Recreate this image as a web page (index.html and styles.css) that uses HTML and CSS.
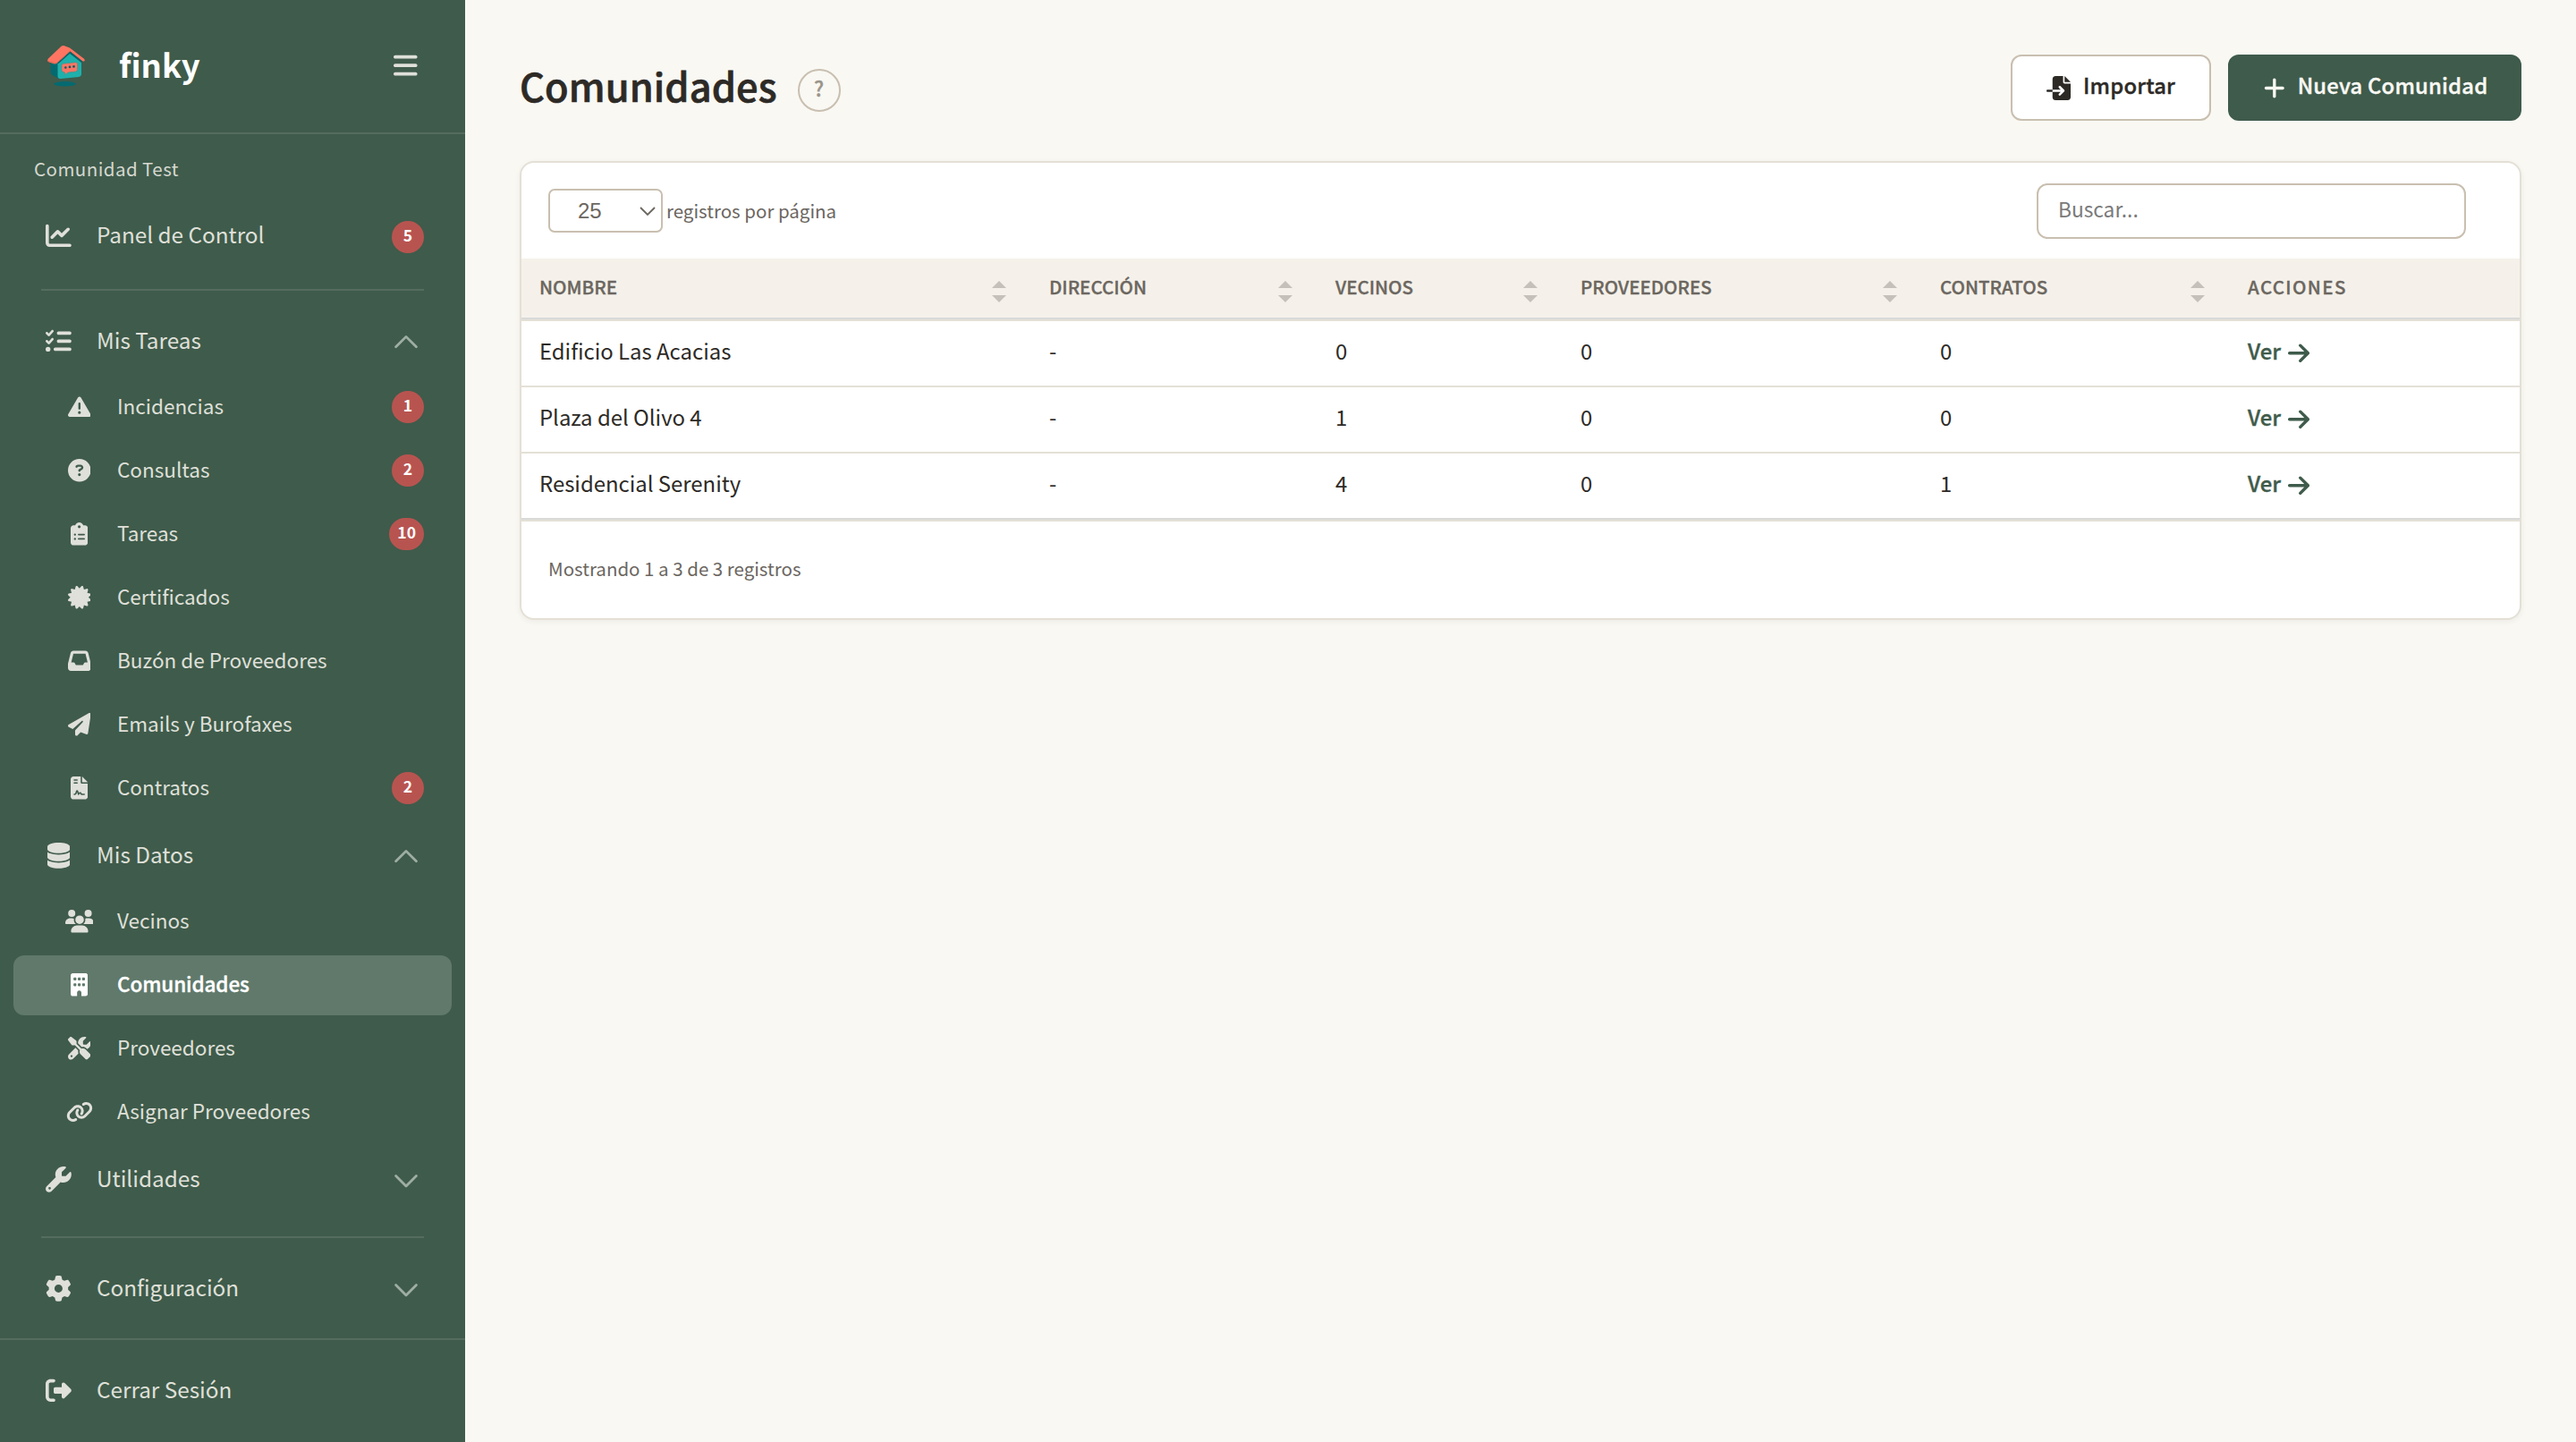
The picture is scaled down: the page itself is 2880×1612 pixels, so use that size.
FILE: index.html
```
<!DOCTYPE html>
<html lang="es">

<head>
  <meta charset="UTF-8" />
  <title>Finky - Comunidades</title>
  <meta name="viewport" content="width=device-width, initial-scale=1.0" />
  <link rel="stylesheet" href="styles.css">
</head>

<body>
  <aside class="sidebar">
    <div class="sidebar-header">
      <svg class="logo" viewBox="0 0 60 60">
        <ellipse cx="27.5" cy="49.8" rx="12.3" ry="2.7" fill="#046a70" />
        <path d="M11.5 27l9-3 1 20-7-3.6q-3-1.4-3-4z" fill="#046a70" />
        <path d="M19.5 27L33 15.500 46 26v12.500q0 3-3 3.400l-20 2q-3.500.3-3.500-3z" fill="#1fb0ac" />
        <path d="M20 26.500L33 14.800 46.500 25" fill="none" stroke="#07676c" stroke-width="1.600" />
        <path d="M8.200 24.200q-.5-1.600 1-2.900L23.500 7.700q1.300-1.200 3-.6L33 9.500l16 12.300q1.400 1.300.4 2.400-1 .8-2.500-.2L33.500 13.300 18.500 26.700q-1.600 1.200-3.500.5l-5-1.600q-1.400-.4-1.800-1.400z" fill="#ff7562" />
        <path d="M8.300 24q2.500.9 8 2.600 1 .2 2.200-.3l14.800-13.200" fill="none" stroke="#d9604f" stroke-width=".7" />
        <path d="M25.500 27.200l14-1.500q2.200-.1 2.300 2l-.2 6q-.1 2-2 2.300l-8.600 1-3 2.500-.6-2.500-1.600-.5q-1.800-.3-1.900-2v-5q0-2 1.600-2.300z" fill="#fb7564" stroke="#4a8f86" stroke-width=".7" />
        <g fill="#0a5a60">
          <circle cx="28.300" cy="31.500" r="1.300" />
          <circle cx="33" cy="30.900" r="1.300" />
          <circle cx="37.500" cy="30.400" r="1.300" />
        </g>
      </svg>
      <span class="brand">finky</span>
      <svg class="burger" viewBox="0 0 448 512"><path d="M0 96C0 78.3 14.3 64 32 64H416c17.700 0 32 14.300 32 32s-14.300 32-32 32H32C14.300 128 0 113.700 0 96zM0 256c0-17.700 14.300-32 32-32H416c17.700 0 32 14.300 32 32s-14.300 32-32 32H32c-17.700 0-32-14.300-32-32zM448 416c0 17.700-14.300 32-32 32H32c-17.700 0-32-14.300-32-32s14.300-32 32-32H416c17.700 0 32 14.300 32 32z" /></svg>
    </div>

    <div class="account">Comunidad Test</div>

    <nav class="nav">
      <a class="nav-item">
        <span class="nav-icon"><svg viewBox="0 0 512 512"><path d="M64 64c0-17.700-14.300-32-32-32S0 46.300 0 64V400c0 44.200 35.800 80 80 80H480c17.700 0 32-14.300 32-32s-14.300-32-32-32H80c-8.800 0-16-7.200-16-16V64zm406.600 86.600c12.500-12.500 12.500-32.800 0-45.300s-32.800-12.500-45.300 0L320 210.700l-57.400-57.400c-12.500-12.500-32.800-12.500-45.300 0l-112 112c-12.500 12.500-12.500 32.800 0 45.300s32.800 12.500 45.300 0L240 221.300l57.400 57.400c12.500 12.500 32.800 12.500 45.300 0l128-128z" /></svg></span>
        <span class="nav-label">Panel de Control</span>
        <span class="badge">5</span>
      </a>
      <div class="divider"></div>

      <a class="nav-item">
        <span class="nav-icon"><svg viewBox="0 0 512 512"><path d="M152.1 38.2c9.9 8.9 10.7 24 1.8 33.9l-72 80c-4.4 4.9-10.6 7.8-17.2 7.9s-12.9-2.4-17.6-7L7 113C-2.3 103.6-2.3 88.4 7 79s24.6-9.4 33.900 0l22.100 22.100 55.100-61.200c8.900-9.900 24-10.700 33.900-1.800zm0 160c9.900 8.900 10.700 24 1.800 33.900l-72 80c-4.400 4.900-10.600 7.800-17.200 7.900s-12.900-2.400-17.600-7L7 273c-9.400-9.400-9.400-24.600 0-33.900s24.600-9.400 33.900 0l22.100 22.100 55.100-61.200c8.900-9.900 24-10.700 33.900-1.800zM224 96c0-17.700 14.300-32 32-32H480c17.700 0 32 14.300 32 32s-14.300 32-32 32H256c-17.700 0-32-14.300-32-32zm0 160c0-17.700 14.300-32 32-32H480c17.700 0 32 14.300 32 32s-14.300 32-32 32H256c-17.700 0-32-14.300-32-32zM160 416c0-17.700 14.300-32 32-32H480c17.700 0 32 14.300 32 32s-14.300 32-32 32H192c-17.700 0-32-14.300-32-32zM48 368a48 48 0 1 1 0 96 48 48 0 1 1 0-96z" /></svg></span>
        <span class="nav-label">Mis Tareas</span>
        <svg class="chevron" viewBox="0 0 16 16"><path d="M1.900 11.100L8 5l6.100 6.100" /></svg>
      </a>
      <div class="subnav">
        <a class="sub-item">
          <span class="nav-icon"><svg viewBox="0 0 512 512"><path d="M256 32c14.200 0 27.300 7.500 34.500 19.800l216 368c7.300 12.400 7.300 27.700 .2 40.100S486.300 480 472 480H40c-14.300 0-27.600-7.700-34.700-20.100s-7-27.800 .2-40.100l216-368C228.700 39.500 241.800 32 256 32zm0 128c-13.300 0-24 10.700-24 24V296c0 13.300 10.700 24 24 24s24-10.700 24-24V184c0-13.300-10.700-24-24-24zm32 224a32 32 0 1 0 -64 0 32 32 0 1 0 64 0z" /></svg></span>
          <span class="nav-label">Incidencias</span>
          <span class="badge">1</span>
        </a>
        <a class="sub-item">
          <span class="nav-icon"><svg viewBox="0 0 512 512"><path d="M256 512A256 256 0 1 0 256 0a256 256 0 1 0 0 512zM169.800 165.300c7.900-22.300 29.100-37.300 52.800-37.300h58.300c34.900 0 63.100 28.300 63.100 63.100c0 22.600-12.100 43.500-31.700 54.800L280 264.400c-.2 13-10.900 23.600-24 23.600c-13.300 0-24-10.700-24-24V250.500c0-8.600 4.600-16.500 12.100-20.800l44.300-25.400c4.700-2.700 7.600-7.700 7.600-13.100c0-8.400-6.800-15.100-15.100-15.100H222.600c-3.400 0-6.400 2.100-7.500 5.300l-.4 1.200c-4.400 12.500-18.200 19-30.600 14.600s-19-18.200-14.600-30.600l.4-1.200zM224 352a32 32 0 1 1 64 0 32 32 0 1 1 -64 0z" /></svg></span>
          <span class="nav-label">Consultas</span>
          <span class="badge">2</span>
        </a>
        <a class="sub-item">
          <span class="nav-icon"><svg viewBox="0 0 384 512"><path d="M192 0c-41.800 0-77.400 26.700-90.500 64H64C28.700 64 0 92.700 0 128V448c0 35.300 28.700 64 64 64H320c35.300 0 64-28.700 64-64V128c0-35.300-28.700-64-64-64H282.500C269.400 26.700 233.800 0 192 0zm0 64a32 32 0 1 1 0 64 32 32 0 1 1 0-64zM72 272a24 24 0 1 1 48 0 24 24 0 1 1 -48 0zm104-16H304c8.800 0 16 7.200 16 16s-7.200 16-16 16H176c-8.800 0-16-7.200-16-16s7.200-16 16-16zM72 368a24 24 0 1 1 48 0 24 24 0 1 1 -48 0zm88 0c0-8.800 7.200-16 16-16H304c8.800 0 16 7.200 16 16s-7.200 16-16 16H176c-8.800 0-16-7.200-16-16z" /></svg></span>
          <span class="nav-label">Tareas</span>
          <span class="badge">10</span>
        </a>
        <a class="sub-item">
          <span class="nav-icon"><svg viewBox="0 0 512 512"><path d="M211 7.300C205 1 196-1.400 187.600 .8s-14.900 8.900-17.100 17.300L154.700 80.600l-62-17.500c-8.400-2.400-17.400 0-23.500 6.100s-8.500 15.100-6.100 23.500l17.500 62L18.100 170.600c-8.400 2.100-15 8.700-17.300 17.100S1 205 7.300 211l46.200 45L7.300 301C1 307-1.400 316 .8 324.400s8.900 14.900 17.300 17.100l62.500 15.800-17.500 62c-2.400 8.400 0 17.400 6.100 23.500s15.100 8.500 23.500 6.100l62-17.500 15.800 62.500c2.100 8.400 8.700 15 17.100 17.300s17.300-.2 23.400-6.400l45-46.200 45 46.200c6.100 6.200 15 8.700 23.400 6.400s14.900-8.900 17.100-17.300l15.800-62.500 62 17.500c8.400 2.400 17.400 0 23.500-6.100s8.500-15.100 6.100-23.500l-17.500-62 62.500-15.800c8.400-2.100 15-8.700 17.300-17.100s-.2-17.400-6.400-23.400l-46.200-45 46.200-45c6.200-6.100 8.700-15 6.400-23.400s-8.900-14.900-17.300-17.100l-62.500-15.800 17.500-62c2.400-8.400 0-17.400-6.100-23.500s-15.100-8.500-23.500-6.100l-62 17.500L341.400 18.100c-2.100-8.400-8.700-15-17.100-17.300S307 1 301 7.300L256 53.500 211 7.300z" /></svg></span>
          <span class="nav-label">Certificados</span>
        </a>
        <a class="sub-item">
          <span class="nav-icon"><svg viewBox="0 0 512 512"><path d="M121 32C91.600 32 66 52 58.900 80.500L1.900 308.400C.6 313.500 0 318.700 0 323.900V416c0 35.300 28.700 64 64 64H448c35.300 0 64-28.700 64-64V323.900c0-5.200-.6-10.400-1.900-15.500l-57-227.900C446 52 420.400 32 391 32H121zm0 64H391l48 192H387.800c-12.100 0-23.200 6.800-28.600 17.700l-14.300 28.600c-5.400 10.800-16.500 17.700-28.600 17.700H195.800c-12.100 0-23.200-6.800-28.600-17.700l-14.300-28.600c-5.400-10.800-16.500-17.700-28.600-17.700H73L121 96z" /></svg></span>
          <span class="nav-label">Buzón de Proveedores</span>
        </a>
        <a class="sub-item">
          <span class="nav-icon"><svg viewBox="0 0 512 512"><path d="M498.100 5.600c10.100 7 15.400 19.100 13.500 31.200l-64 416c-1.500 9.700-7.400 18.200-16 23s-18.900 5.400-28 1.600L284 427.700l-68.500 74.100c-8.900 9.700-22.900 12.900-35.200 8.100S160 493.200 160 480V396.400c0-4 1.500-7.800 4.200-10.700L331.800 202.800c5.800-6.300 5.600-16-.4-22s-15.700-6.400-22-.7L106 360.800 17.700 316.600C7.100 311.300 .3 300.700 0 288.900s5.900-22.800 16.100-28.700l448-256c10.700-6.100 23.900-5.500 34 1.400z" /></svg></span>
          <span class="nav-label">Emails y Burofaxes</span>
        </a>
        <a class="sub-item">
          <span class="nav-icon"><svg viewBox="0 0 384 512"><path d="M64 0C28.700 0 0 28.700 0 64V448c0 35.300 28.700 64 64 64H320c35.300 0 64-28.700 64-64V160H256c-17.700 0-32-14.300-32-32V0H64zM256 0V128H384L256 0zM80 64h64c8.800 0 16 7.200 16 16s-7.200 16-16 16H80c-8.800 0-16-7.200-16-16s7.200-16 16-16zm0 64h64c8.800 0 16 7.200 16 16s-7.200 16-16 16H80c-8.800 0-16-7.200-16-16s7.200-16 16-16zm54.200 253.800c-6.100 20.300-24.800 34.200-46 34.200H80c-8.800 0-16-7.200-16-16s7.200-16 16-16h8.200c7.100 0 13.300-4.600 15.300-11.400l14.900-49.500c3.400-11.300 13.800-19.100 25.600-19.100s22.200 7.700 25.600 19.100l11.600 38.600c7.400-6.200 16.800-9.700 26.800-9.700c15.900 0 30.400 9 37.500 23.200l4.400 8.800H304c8.800 0 16 7.200 16 16s-7.200 16-16 16H240c-6.100 0-11.600-3.400-14.300-8.800l-8.800-17.700c-1.700-3.400-5.100-5.500-8.800-5.500s-7.200 2.100-8.800 5.500l-8.800 17.700c-2.900 5.900-9.200 9.400-15.700 8.800s-12.100-5.100-13.900-11.300L144 349l-9.800 32.800z" /></svg></span>
          <span class="nav-label">Contratos</span>
          <span class="badge">2</span>
        </a>
      </div>

      <a class="nav-item">
        <span class="nav-icon"><svg viewBox="0 0 448 512"><path d="M448 80v48c0 44.200-100.300 80-224 80S0 172.200 0 128V80C0 35.800 100.300 0 224 0S448 35.800 448 80zM393.200 214.700c20.800-7.400 39.900-16.900 54.800-28.600V288c0 44.200-100.300 80-224 80S0 332.200 0 288V186.100c14.900 11.800 34 21.200 54.800 28.600C99.700 230.700 159.500 240 224 240s124.300-9.300 169.200-25.300zM0 346.100c14.900 11.800 34 21.200 54.800 28.600C99.700 390.700 159.500 400 224 400s124.300-9.300 169.200-25.300c20.800-7.400 39.900-16.900 54.800-28.600V432c0 44.200-100.300 80-224 80S0 476.200 0 432V346.100z" /></svg></span>
        <span class="nav-label">Mis Datos</span>
        <svg class="chevron" viewBox="0 0 16 16"><path d="M1.900 11.100L8 5l6.100 6.100" /></svg>
      </a>
      <div class="subnav">
        <a class="sub-item">
          <span class="nav-icon"><svg viewBox="0 0 640 512"><path d="M144 0a80 80 0 1 1 0 160A80 80 0 1 1 144 0zM512 0a80 80 0 1 1 0 160A80 80 0 1 1 512 0zM0 298.700C0 239.800 47.800 192 106.700 192h42.700c15.900 0 31 3.500 44.600 9.700c-1.300 7.200-1.900 14.700-1.900 22.300c0 38.200 16.800 72.500 43.300 96c-.2 0-.4 0-.7 0H21.300C9.600 320 0 310.400 0 298.700zM405.300 320c-.2 0-.4 0-.7 0c26.600-23.500 43.300-57.800 43.300-96c0-7.600-.7-15-1.900-22.300c13.600-6.300 28.700-9.700 44.600-9.700h42.700C592.200 192 640 239.800 640 298.700c0 11.800-9.600 21.300-21.300 21.300H405.300zM224 224a96 96 0 1 1 192 0 96 96 0 1 1 -192 0zM128 485.300C128 411.700 187.700 352 261.300 352H378.700C452.300 352 512 411.700 512 485.300c0 14.700-11.900 26.700-26.700 26.700H154.700c-14.700 0-26.700-11.900-26.700-26.700z" /></svg></span>
          <span class="nav-label">Vecinos</span>
        </a>
        <a class="sub-item active">
          <span class="nav-icon"><svg viewBox="0 0 384 512"><path d="M48 0C21.500 0 0 21.500 0 48V464c0 26.500 21.500 48 48 48h96V432c0-26.500 21.500-48 48-48s48 21.500 48 48v80h96c26.500 0 48-21.500 48-48V48c0-26.500-21.500-48-48-48H48zM64 240c0-8.800 7.200-16 16-16h32c8.800 0 16 7.200 16 16v32c0 8.800-7.200 16-16 16H80c-8.800 0-16-7.200-16-16V240zm112-16h32c8.800 0 16 7.200 16 16v32c0 8.800-7.200 16-16 16H176c-8.800 0-16-7.200-16-16V240c0-8.800 7.200-16 16-16zm80 16c0-8.800 7.200-16 16-16h32c8.800 0 16 7.200 16 16v32c0 8.800-7.200 16-16 16H272c-8.800 0-16-7.200-16-16V240zM80 96h32c8.800 0 16 7.200 16 16v32c0 8.800-7.200 16-16 16H80c-8.800 0-16-7.200-16-16V112c0-8.800 7.200-16 16-16zm80 16c0-8.800 7.200-16 16-16h32c8.800 0 16 7.200 16 16v32c0 8.800-7.200 16-16 16H176c-8.800 0-16-7.200-16-16V112zM272 96h32c8.800 0 16 7.200 16 16v32c0 8.800-7.200 16-16 16H272c-8.800 0-16-7.200-16-16V112c0-8.800 7.200-16 16-16z" /></svg></span>
          <span class="nav-label">Comunidades</span>
        </a>
        <a class="sub-item">
          <span class="nav-icon"><svg viewBox="0 0 512 512"><path d="M78.600 5C69.100-2.400 55.600-1.500 47 7L7 47c-8.500 8.500-9.400 22-2.100 31.600l80 104c4.500 5.900 11.600 9.400 19 9.400h54.100l109 109c-14.700 29-10 65.400 14.300 89.600l112 112c12.500 12.500 32.800 12.500 45.300 0l64-64c12.500-12.500 12.500-32.800 0-45.300l-112-112c-24.200-24.200-60.600-29-89.600-14.300l-109-109V104c0-7.500-3.500-14.500-9.400-19L78.600 5zM19.900 396.100C7.200 408.800 0 426.100 0 444.100C0 481.600 30.400 512 67.900 512c18 0 35.300-7.200 48-19.900L233.700 374.300c-7.800-20.900-9-43.600-3.600-65.100l-61.700-61.700L19.900 396.100zM512 144c0-10.500-1.100-20.700-3.200-30.500c-2.400-11.200-16.100-14.100-24.200-6l-63.900 63.900c-3 3-7.100 4.700-11.300 4.700H352c-8.800 0-16-7.200-16-16V102.600c0-4.200 1.700-8.300 4.700-11.300l63.900-63.900c8.100-8.100 5.200-21.800-6-24.200C388.700 1.100 378.500 0 368 0C288.500 0 224 64.500 224 144l0 .8 85.300 85.300c36-9.100 75.800 .5 104 28.700L429 274.500c49-23 83-72.800 83-130.500zM56 432a24 24 0 1 1 48 0 24 24 0 1 1 -48 0z" /></svg></span>
          <span class="nav-label">Proveedores</span>
        </a>
        <a class="sub-item">
          <span class="nav-icon"><svg viewBox="0 0 640 512" class="icon-link"><path d="M579.800 267.700c56.500-56.500 56.500-148 0-204.500c-50-50-128.800-56.500-186.300-15.400l-1.600 1.100c-14.400 10.300-17.700 30.300-7.400 44.600s30.300 17.700 44.600 7.400l1.600-1.100c32.100-22.900 76-19.300 103.800 8.600c31.500 31.500 31.500 82.500 0 114L422.300 334.800c-31.500 31.500-82.500 31.500-114 0c-27.900-27.900-31.500-71.800-8.600-103.800l1.100-1.600c10.300-14.400 6.900-34.400-7.400-44.600s-34.400-6.900-44.600 7.400l-1.100 1.600C206.500 251.200 213 330 263 380c56.500 56.500 148 56.500 204.500 0L579.800 267.700zM60.200 244.300c-56.500 56.500-56.500 148 0 204.500c50 50 128.800 56.500 186.300 15.400l1.600-1.100c14.400-10.300 17.700-30.300 7.400-44.600s-30.300-17.700-44.600-7.400l-1.600 1.100c-32.100 22.900-76 19.300-103.800-8.600C74 372 74 321 105.500 289.500L217.700 177.200c31.500-31.500 82.500-31.500 114 0c27.900 27.900 31.500 71.800 8.600 103.900l-1.100 1.600c-10.300 14.400-6.900 34.400 7.400 44.600s34.400 6.900 44.600-7.400l1.100-1.600C433.500 260.800 427 182 377 132c-56.500-56.500-148-56.500-204.500 0L60.200 244.300z" /></svg></span>
          <span class="nav-label">Asignar Proveedores</span>
        </a>
      </div>

      <a class="nav-item">
        <span class="nav-icon"><svg viewBox="0 0 512 512"><path d="M352 320c88.400 0 160-71.600 160-160c0-15.300-2.200-30.100-6.200-44.200c-3.100-10.800-16.400-13.200-24.300-5.300l-76.800 76.800c-3 3-7.100 4.700-11.300 4.700H336c-8.800 0-16-7.200-16-16V118.600c0-4.200 1.700-8.300 4.700-11.300l76.800-76.800c7.900-7.900 5.400-21.200-5.300-24.300C382.100 2.200 367.300 0 352 0C263.600 0 192 71.600 192 160c0 19.100 3.400 37.500 9.500 54.500L19.900 396.100C7.200 408.800 0 426.100 0 444.100C0 481.600 30.400 512 67.900 512c18 0 35.300-7.200 48-19.900L297.500 310.500c17 6.200 35.400 9.500 54.500 9.500zM80 408a24 24 0 1 1 0 48 24 24 0 1 1 0-48z" /></svg></span>
        <span class="nav-label">Utilidades</span>
        <svg class="chevron" viewBox="0 0 16 16"><path d="M1.900 5.600L8 11.700l6.100-6.100" /></svg>
      </a>
      <div class="divider divider-low"></div>
      <a class="nav-item">
        <span class="nav-icon"><svg viewBox="0 0 512 512"><path d="M495.900 166.600c3.200 8.700 .5 18.400-6.400 24.600l-43.300 39.400c1.100 8.300 1.700 16.800 1.700 25.400s-.6 17.100-1.700 25.400l43.300 39.400c6.900 6.200 9.600 15.900 6.400 24.600c-4.400 11.900-9.700 23.300-15.800 34.300l-4.700 8.100c-6.600 11-14 21.400-22.100 31.200c-5.900 7.200-15.700 9.600-24.500 6.800l-55.700-17.700c-13.400 10.300-28.200 18.900-44 25.400l-12.500 57.100c-2 9.100-9 16.300-18.200 17.800c-13.800 2.300-28 3.500-42.500 3.500s-28.700-1.200-42.500-3.500c-9.200-1.500-16.200-8.700-18.200-17.800l-12.500-57.100c-15.800-6.500-30.600-15.100-44-25.400L83.100 425.900c-8.800 2.800-18.600 .3-24.500-6.800c-8.100-9.800-15.500-20.200-22.100-31.200l-4.700-8.100c-6.100-11-11.400-22.400-15.800-34.300c-3.200-8.700-.5-18.400 6.400-24.600l43.300-39.400C64.600 273.100 64 264.600 64 256s.6-17.100 1.700-25.400L22.400 191.200c-6.900-6.200-9.600-15.900-6.400-24.600c4.400-11.900 9.700-23.300 15.800-34.300l4.700-8.100c6.600-11 14-21.400 22.100-31.200c5.900-7.200 15.700-9.600 24.500-6.800l55.700 17.700c13.400-10.300 28.200-18.900 44-25.400l12.500-57.100c2-9.100 9-16.300 18.200-17.800C227.300 1.200 241.500 0 256 0s28.700 1.200 42.500 3.500c9.200 1.500 16.200 8.700 18.200 17.800l12.500 57.100c15.800 6.500 30.600 15.100 44 25.400l55.700-17.700c8.800-2.800 18.600-.3 24.500 6.800c8.100 9.800 15.500 20.200 22.100 31.200l4.700 8.100c6.100 11 11.400 22.400 15.800 34.300zM256 336a80 80 0 1 0 0-160 80 80 0 1 0 0 160z" /></svg></span>
        <span class="nav-label">Configuración</span>
        <svg class="chevron" viewBox="0 0 16 16"><path d="M1.900 5.600L8 11.700l6.100-6.100" /></svg>
      </a>
    </nav>

    <div class="sidebar-footer">
      <a class="nav-item">
        <span class="nav-icon"><svg viewBox="0 0 512 512"><path d="M377.900 105.900L500.700 228.700c7.200 7.200 11.300 17.100 11.300 27.300s-4.100 20.100-11.300 27.300L377.900 406.100c-6.400 6.400-15 9.900-24 9.900c-18.700 0-33.900-15.200-33.900-33.900l0-62.100-128 0c-17.700 0-32-14.300-32-32l0-64c0-17.700 14.300-32 32-32l128 0 0-62.100c0-18.700 15.200-33.900 33.900-33.900c9 0 17.600 3.600 24 9.900zM160 96L96 96c-17.700 0-32 14.300-32 32l0 256c0 17.700 14.300 32 32 32l64 0c17.700 0 32 14.300 32 32s-14.300 32-32 32l-64 0c-53 0-96-43-96-96L0 128C0 75 43 32 96 32l64 0c17.700 0 32 14.300 32 32s-14.300 32-32 32z" /></svg></span>
        <span class="nav-label">Cerrar Sesión</span>
      </a>
    </div>
  </aside>

  <main class="main">
    <header class="page-header">
      <h1>Comunidades</h1>
      <span class="help">?</span>
      <div class="actions">
        <button class="btn btn-light" type="button">
          <svg viewBox="0 0 512 512"><path d="M128 64c0-35.300 28.700-64 64-64H352V128c0 17.700 14.300 32 32 32H512V448c0 35.300-28.700 64-64 64H192c-35.300 0-64-28.700-64-64V336H302.100l-39 39c-9.400 9.400-9.400 24.600 0 33.900s24.600 9.400 33.900 0l80-80c9.400-9.400 9.400-24.600 0-33.900l-80-80c-9.400-9.400-24.600-9.400-33.900 0s-9.400 24.600 0 33.900l39 39H128V64zm0 224v48H24c-13.300 0-24-10.700-24-24s10.700-24 24-24H128zM512 128H384V0L512 128z" /></svg>
          <span>Importar</span>
        </button>
        <button class="btn btn-primary" type="button">
          <svg viewBox="0 0 448 512"><path d="M256 80c0-17.700-14.300-32-32-32s-32 14.300-32 32V224H48c-17.700 0-32 14.300-32 32s14.300 32 32 32H192V432c0 17.700 14.300 32 32 32s32-14.300 32-32V288H400c17.700 0 32-14.300 32-32s-14.300-32-32-32H256V80z" /></svg>
          <span>Nueva Comunidad</span>
        </button>
      </div>
    </header>

    <section class="card">
      <div class="toolbar">
        <span class="page-size">25
          <svg viewBox="0 0 18 10"><path d="M1 1l8 8 8-8" /></svg>
        </span>
        <span class="page-size-label">registros por página</span>
        <input class="search" type="text" placeholder="Buscar..." autocomplete="off" />
      </div>

      <table class="table">
        <colgroup>
          <col class="col-name"><col class="col-address"><col class="col-neighbors"><col class="col-providers"><col class="col-contracts"><col class="col-actions">
        </colgroup>
        <thead>
          <tr>
            <th><div class="sortable">NOMBRE <svg viewBox="0 0 16 24"><path d="M8 0l8 8H0zM0 16h16l-8 8z" /></svg></div></th>
            <th><div class="sortable">DIRECCIÓN <svg viewBox="0 0 16 24"><path d="M8 0l8 8H0zM0 16h16l-8 8z" /></svg></div></th>
            <th><div class="sortable">VECINOS <svg viewBox="0 0 16 24"><path d="M8 0l8 8H0zM0 16h16l-8 8z" /></svg></div></th>
            <th><div class="sortable">PROVEEDORES <svg viewBox="0 0 16 24"><path d="M8 0l8 8H0zM0 16h16l-8 8z" /></svg></div></th>
            <th><div class="sortable">CONTRATOS <svg viewBox="0 0 16 24"><path d="M8 0l8 8H0zM0 16h16l-8 8z" /></svg></div></th>
            <th class="th-actions">ACCIONES</th>
          </tr>
        </thead>
        <tbody>
          <tr>
            <td>Edificio Las Acacias</td>
            <td>-</td>
            <td>0</td>
            <td>0</td>
            <td>0</td>
            <td><a class="view-link">Ver <svg viewBox="0 0 448 512"><path d="M438.600 278.600c12.500-12.500 12.500-32.800 0-45.300l-160-160c-12.500-12.500-32.800-12.500-45.300 0s-12.500 32.800 0 45.300L338.800 224 32 224c-17.700 0-32 14.300-32 32s14.300 32 32 32l306.700 0L233.400 393.400c-12.500 12.500-12.500 32.800 0 45.300s32.800 12.500 45.300 0l160-160z" /></svg></a></td>
          </tr>
          <tr>
            <td>Plaza del Olivo 4</td>
            <td>-</td>
            <td>1</td>
            <td>0</td>
            <td>0</td>
            <td><a class="view-link">Ver <svg viewBox="0 0 448 512"><path d="M438.600 278.600c12.500-12.500 12.500-32.800 0-45.300l-160-160c-12.500-12.500-32.800-12.500-45.300 0s-12.500 32.800 0 45.300L338.800 224 32 224c-17.700 0-32 14.300-32 32s14.300 32 32 32l306.700 0L233.400 393.400c-12.500 12.500-12.500 32.800 0 45.300s32.800 12.500 45.300 0l160-160z" /></svg></a></td>
          </tr>
          <tr>
            <td>Residencial Serenity</td>
            <td>-</td>
            <td>4</td>
            <td>0</td>
            <td>1</td>
            <td><a class="view-link">Ver <svg viewBox="0 0 448 512"><path d="M438.600 278.600c12.500-12.500 12.500-32.800 0-45.300l-160-160c-12.500-12.500-32.800-12.500-45.300 0s-12.500 32.800 0 45.300L338.800 224 32 224c-17.700 0-32 14.300-32 32s14.300 32 32 32l306.700 0L233.400 393.400c-12.500 12.500-12.500 32.800 0 45.300s32.800 12.500 45.300 0l160-160z" /></svg></a></td>
          </tr>
        </tbody>
      </table>

      <div class="card-footer">Mostrando 1 a 3 de 3 registros</div>
    </section>
  </main>
</body>

</html>
```
FILE: styles.css
```
:root {
  --green: #3f5b4b;
  --bg: #f9f8f3;
  --sidebar-text: #dfe0d9;
  --sidebar-line: #546c5e;
  --ink: #2d2a26;
  --muted: #6b665f;
  --border: #e4e0d6;
  --border-dark: #c9bfb0;
  --line-gray: #d9d9d9;
  --red: #b85450;
}

* {
  box-sizing: border-box;
}

body {
  margin: 0;
  display: flex;
  height: 1612px;
  overflow: hidden;
  font-family: "Noto Sans CJK SC", "Open Sans", sans-serif;
  background: var(--bg);
  color: var(--ink);
}

svg {
  display: block;
  fill: currentColor;
  flex-shrink: 0;
}

/* medium plus a thin stroke gives a semibold */
h1,
.help,
.btn,
.table th,
.view-link,
.sub-item.active {
  font-weight: 500;
  -webkit-text-stroke: 0.016em currentColor;
}

/* sidebar */

.sidebar {
  width: 520px;
  flex-shrink: 0;
  display: flex;
  flex-direction: column;
  background: var(--green);
  color: var(--sidebar-text);
}

.sidebar-header {
  height: 150px;
  display: flex;
  align-items: center;
  padding: 0 53px 0 45px;
  border-bottom: 2px solid var(--sidebar-line);
}

.logo {
  width: 60px;
  height: 60px;
}

.brand {
  margin-left: 28px;
  padding-bottom: 6px;
  color: #fff;
  font-size: 36.4px;
  line-height: 52px;
  font-weight: 700;
}

.burger {
  height: 30.4px;
  margin-left: auto;
  margin-bottom: 1px;
}

.account {
  height: 77px;
  padding-left: 38px;
  font-size: 20.5px;
  line-height: 76px;
  letter-spacing: 0.45px;
  color: #d5d8d0;
}

.nav-item,
.sub-item {
  display: flex;
  align-items: center;
  border-radius: 12px;
}

.nav-item {
  height: 73px;
  margin: 0 15px;
  padding: 0 31px;
  font-size: 24.3px;
}

.nav-icon {
  width: 39px;
  margin-right: 23px;
  display: flex;
  justify-content: center;
}

.nav-icon svg {
  height: 28.8px;
}

.nav-label {
  padding-bottom: 4px;
  line-height: 36px;
}

.chevron {
  width: 30px;
  height: 30px;
  margin-left: auto;
  margin-right: 5px;
  fill: none;
  stroke: #9faea5;
  stroke-width: 1.5;
  stroke-linecap: round;
  stroke-linejoin: round;
}

.badge {
  min-width: 36px;
  height: 36px;
  margin-left: auto;
  padding: 0 9px 4px;
  border-radius: 18px;
  background: var(--red);
  color: #fff;
  font-size: 17.5px;
  line-height: 32px;
  font-weight: 700;
  text-align: center;
}

.nav-item .badge {
  margin-top: 3px;
}

.divider {
  height: 2px;
  margin: 23px 46px 20px;
  background: var(--sidebar-line);
}

.divider-low {
  margin-top: 27px;
}

.subnav {
  padding: 3.5px 0 1.5px;
}

.sub-item {
  height: 67px;
  margin: 0 15px 4px;
  padding: 0 31px 0 54px;
  font-size: 22.5px;
}

.sub-item .nav-icon svg {
  height: 25.6px;
}

.sub-item .nav-icon .icon-link {
  height: 24px;
}

.sub-item.active {
  background: #60796b;
  color: #fff;
  letter-spacing: -0.1px;
}

.sidebar-footer {
  height: 116px;
  margin-top: auto;
  padding-top: 20px;
  border-top: 2px solid var(--sidebar-line);
}

/* main */

.main {
  flex-grow: 1;
  padding: 61px 61px 0;
}

.page-header {
  height: 74px;
  margin-bottom: 45px;
  display: flex;
  align-items: center;
}

h1 {
  margin: 0;
  padding-bottom: 7px;
  font-size: 43.3px;
  line-height: 60px;
  letter-spacing: 0.1px;
}

.help {
  width: 48px;
  height: 48px;
  margin: 6px 0 0 23px;
  padding-bottom: 5px;
  border: 2px solid var(--border-dark);
  border-radius: 50%;
  color: #9a948a;
  font-size: 22.5px;
  line-height: 39px;
  text-align: center;
}

.actions {
  display: flex;
  gap: 19px;
  margin-left: auto;
}

.btn {
  height: 74px;
  display: flex;
  align-items: center;
  justify-content: flex-start;
  border: 2px solid var(--green);
  border-radius: 12px;
  padding: 0 0 0 38px;
  font-family: inherit;
  font-size: 23.8px;
  letter-spacing: 0.2px;
  white-space: nowrap;
}

.btn svg {
  height: 27px;
}

.btn span {
  margin-left: 14px;
  padding-bottom: 6px;
  line-height: 36px;
}

.btn-light {
  width: 224px;
  background: #fff;
  border-color: var(--border-dark);
  color: var(--ink);
}

.btn-primary {
  width: 328px;
  background: var(--green);
  color: var(--bg);
}

.card {
  background: #fff;
  border: 2px solid var(--border);
  border-radius: 16px;
  box-shadow: 0 2px 6px rgba(45, 42, 38, 0.06);
  overflow: hidden;
}

.toolbar {
  height: 107px;
  display: flex;
  align-items: center;
  padding: 0 60px 0 30px;
  color: var(--muted);
}

.page-size {
  width: 128px;
  height: 49px;
  display: flex;
  align-items: center;
  justify-content: space-between;
  padding: 0 6px 0 31px;
  border: 2px solid var(--border-dark);
  border-radius: 7px;
  font-family: "Liberation Sans", sans-serif;
  font-size: 24px;
}

.page-size svg {
  width: 18px;
  fill: none;
  stroke: currentColor;
  stroke-width: 1.8;
}

.page-size-label {
  margin-left: 4px;
  padding-bottom: 1px;
  font-size: 20.5px;
  line-height: 30px;
}

.search {
  width: 480px;
  height: 62px;
  margin-left: auto;
  padding: 0 22px 4px;
  border: 2px solid var(--border-dark);
  border-radius: 12px;
  outline: none;
  background: #fff;
  font-family: inherit;
  font-size: 22.7px;
}

.search::placeholder {
  color: #7a7a7a;
}

.table {
  width: 100%;
  table-layout: fixed;
  border-collapse: separate;
  border-spacing: 0;
}

.col-name {
  width: 570px;
}

.col-address {
  width: 320px;
}

.col-neighbors {
  width: 274px;
}

.col-providers {
  width: 402px;
}

.col-contracts {
  width: 344px;
}

.col-actions {
  width: 324px;
}

.table th {
  height: 70px;
  padding: 0 28px 6px 20px;
  background: #f5f1ea;
  border-bottom: 2px solid var(--border);
  box-shadow: inset 0 -2px var(--line-gray);
  color: var(--muted);
  font-size: 20.5px;
  line-height: 30px;
  text-align: left;
}

.table .th-actions {
  letter-spacing: 1.35px;
}

.sortable {
  display: flex;
  align-items: center;
  justify-content: space-between;
  height: 30px;
}

.sortable svg {
  width: 16px;
  height: 24px;
  margin-top: 12px;
  fill: #c5c1ba;
}

.table td {
  height: 74px;
  padding: 0 20px 7px;
  border-bottom: 2px solid var(--border);
  font-size: 23.9px;
  line-height: 36px;
}

.table tr:last-child td {
  height: 76px;
  padding-bottom: 9px;
  box-shadow: inset 0 -2px var(--line-gray);
}

.view-link {
  display: flex;
  align-items: center;
  gap: 8px;
  color: var(--green);
}

.view-link svg {
  height: 27.5px;
  margin-top: 7px;
}

.card-footer {
  height: 108px;
  padding: 0 30px;
  font-size: 20.5px;
  line-height: 104px;
  color: var(--muted);
}
```
